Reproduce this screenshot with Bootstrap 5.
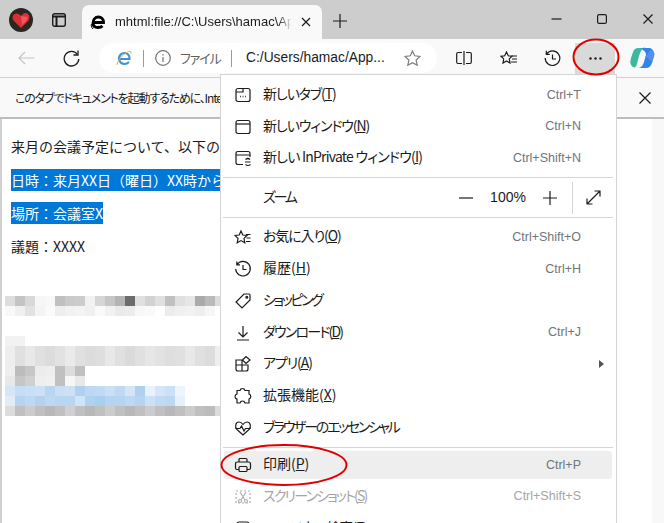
<!DOCTYPE html>
<html lang="ja">
<head>
<meta charset="UTF-8">
<meta name="viewport" content="width=device-width, initial-scale=1.0">
<title>Edge メニュー</title>
<link href="https://cdn.jsdelivr.net/npm/bootstrap@5.3.2/dist/css/bootstrap.min.css" rel="stylesheet">
<style>
  html, body { height: 523px; overflow: hidden; }
  body { font-family: "Liberation Sans", "Noto Sans CJK JP", sans-serif; font-size: 14px; color: #1b1b1b; background: #fff; position: relative; }
  svg { display: block; flex: none; fill: none; stroke: #1c1c1c; stroke-width: 1.2; }
  .tabstrip { height: 39px; background: #cdcdcd; }
  .profile-slot { width: 42px; }
  .tabs-btn { width: 40px; padding-right: 6px; }
  .page-tab { width: 240px; height: 34px; background: #f9f9f9; border-radius: 7px 7px 0 0; padding: 0 11px 0 8px; font-size: 13px; white-space: nowrap; }
  .page-tab-title { width: 182px; overflow: hidden; margin: 0 9px 0 9px; -webkit-mask-image: linear-gradient(90deg, #000 92%, transparent); mask-image: linear-gradient(90deg, #000 92%, transparent); }
  .newtab-btn { width: 36px; }
  .win-btn { width: 46px; padding-left: 14px; }
  .toolbar { height: 39px; background: #f9f9f9; border-bottom: 1px solid #d0d0d0; overflow: hidden; }
  .tool-btn { width: 44px; height: 31px; flex: none; }
  .tool-btn.is-open { width: 40px; background: #d9d9d9; margin: 0 5px 0 1px; }
  .address { width: 338px; height: 30px; background: #fff; border-radius: 15px; margin: 0 5px 0 6px; padding: 0 16px 0 17px; white-space: nowrap; flex: none; }
  .addr-sep { width: 1px; height: 17px; background: #9a9a9a; }
  .addr-scheme { color: #5f5f5f; font-family: "Noto Sans CJK JP", sans-serif; font-feature-settings: "palt"; font-size: 13px; letter-spacing: -1.1px; margin: 0 11px 0 9px; width: 40px; }
  .addr-path { margin-left: 14px; font-size: 13.8px; width: 142px; }
  .infobar { height: 41px; background: #f9f9f9; border-bottom: 2px solid #bdbdbd; padding: 0 11px 0 15px; font-family: "Noto Sans CJK JP", sans-serif; font-feature-settings: "palt"; font-size: 12px; letter-spacing: -1.15px; white-space: nowrap; overflow: hidden; }
  .doc { height: 404px; border-left: 2px solid #d0d0d0; padding-left: 9px; font-family: "Noto Sans CJK JP", sans-serif; font-size: 14px; line-height: 22px; }
  .doc-line { height: 22px; white-space: nowrap; margin-bottom: 11px; overflow: hidden; }
  .doc-line.first { margin-top: 16px; margin-bottom: 12px; }
  .doc-sel { background: #0078d7; color: #fff; display: inline-block; }
  .doc-sel.wide { width: 209px; overflow: hidden; }
  .scroll-rail { width: 12px; background: #f8f8f8; }
  .mosaic { margin: 39px 0 0 -6px; }
  .mosaic-row { height: 10px; }
  .mosaic-cell { width: 10px; height: 10px; flex: none; }
  .mosaic-gap { height: 20px; }
  .app-menu { position: absolute; left: 220px; top: 74px; width: 397px; height: 460px; background: #fff; border: 1px solid #d4d4d4; border-bottom: 0; padding-top: 4px; font-family: "Noto Sans CJK JP", sans-serif; font-feature-settings: "palt"; }
  .menu-row { height: 31.8px; padding: 0 31px 0 10px; margin: 0 4px 0 3px; white-space: nowrap; border-radius: 3px; }
  .menu-row.is-hover { background: #eeeeee; }
  .menu-row.is-off { color: #a5a5a5; }
  .menu-row.is-off svg { stroke: #b0b0b0; }
  .menu-label { margin-left: 11px; font-size: 14px; padding-bottom: 3px; }
  .track-0 { letter-spacing: -.8px; }
  .track-1 { letter-spacing: -1.1px; }
  .track-2 { letter-spacing: -1.8px; }
  .track-3 { letter-spacing: -2.3px; }
  .menu-key { margin-left: auto; font-family: "Liberation Sans", sans-serif; font-size: 12.5px; color: #70757a; }
  .menu-rule { height: 1px; background: #d6d6d6; margin: 3px 3px 0 2px; }
  .zoom-row { height: 39px; padding: 0 15px 0 42px; }
  .zoom-ctl { margin-left: auto; }
  .zoom-val { width: 52px; text-align: center; font-family: "Liberation Sans", sans-serif; font-size: 14px; margin: 0 9px; }
  .zoom-sep { width: 1px; height: 32px; background: #d6d6d6; margin: 0 13px 0 15px; }
  .mark-ring { position: absolute; fill: none; stroke: #e00000; stroke-width: 2; }
</style>
</head>
<body>
  <div class="tabstrip d-flex align-items-end">
    <div class="profile-slot d-flex justify-content-center align-self-center">
      <svg width="24" height="24" viewBox="0 0 24 24" style="stroke:none"><circle cx="12" cy="12" r="12" fill="#2a2622"/><path d="M12 20 4.500 12.500C2.500 9.500 4 5.500 7.500 5.500 9.500 5.500 11 6.500 12 8 13 6.500 14.500 5 16.500 5 20 5 21.500 9 19.500 12.500Z" fill="#dc2f35"/><path d="M12 8 13 17 17 13.500 19 9Z" fill="#f0565c"/></svg>
    </div>
    <div class="tabs-btn d-flex justify-content-center align-self-center">
      <svg width="14" height="14" viewBox="0 0 14 14" style="stroke-width:1.400"><rect x=".7" y=".7" width="12.600" height="12.600" rx="2"/><path d="M.7 3.500H13.300M4.500 3.500V13.300" stroke-width="2"/></svg>
    </div>
    <div class="page-tab d-flex align-items-center">
      <svg width="16" height="16" viewBox="0 0 16 16" style="stroke:#000;stroke-width:2.800"><path d="M3.500 8.500H13.500C13.500 4.500 11 3 8.500 3 5 3 3 6 3 9 3 12 5 13.500 8 13.500 9.500 13.500 11.500 13 12.500 12"/><path d="M3 15C1 13 1 11 1.500 10" stroke-width="1"/></svg>
      <span class="page-tab-title">mhtml:file://C:\Users\hamac\AppData</span>
      <svg width="10" height="10" viewBox="0 0 10 10"><path d="M1 1 9 9M9 1 1 9"/></svg>
    </div>
    <div class="newtab-btn d-flex justify-content-center align-self-center">
      <svg width="14" height="14" viewBox="0 0 14 14" style="margin-top:3px"><path d="M7 0V14M0 7H14"/></svg>
    </div>
    <div class="win-btn d-flex justify-content-center align-self-start ms-auto" style="margin-top:13px">
      <svg width="11" height="11" viewBox="0 0 11 11"><path d="M.5 6H10.500"/></svg>
    </div>
    <div class="win-btn d-flex justify-content-center align-self-start" style="margin-top:14px">
      <svg width="10" height="10" viewBox="0 0 10 10"><rect x=".6" y=".6" width="8.800" height="8.800" rx="1.500"/></svg>
    </div>
    <div class="win-btn d-flex justify-content-center align-self-start" style="margin-top:14px">
      <svg width="10" height="10" viewBox="0 0 10 10"><path d="M.5.500 9.500 9.500M9.500.500.500 9.500"/></svg>
    </div>
  </div>

  <div class="toolbar d-flex align-items-center">
    <div class="tool-btn d-flex align-items-center justify-content-center ms-1" style="width:45px">
      <svg width="17" height="14" viewBox="0 0 17 14" style="stroke:#c4c4c4"><path d="M16.500 7H1M7 1 1 7 7 13"/></svg>
    </div>
    <div class="tool-btn d-flex align-items-center justify-content-center">
      <svg width="17" height="17" viewBox="0 0 17 17" style="stroke-width:1.300"><path d="M14.500 4.500A7.300 7.300 0 1 0 15.800 9"/><path d="M15 .5V5H10.500"/></svg>
    </div>
    <div class="address d-flex align-items-center">
      <svg width="16" height="16" viewBox="0 0 16 16" style="stroke-width:2.200;stroke:#3d93d6"><path d="M3.500 9H13.500C14 5 11 3 8.500 3 5.500 3 3 5.500 3 8.500 3 12 6 14 8.500 14 10.500 14 12 13 13 12"/><path d="M1 15C1 13 3 8 10 3 13 1 15.500 .5 15 3.500" stroke="#e8b13f" stroke-width="1"/></svg>
      <span class="addr-sep" style="margin-left:11px"></span>
      <svg style="margin-left:11px" width="16" height="16" viewBox="0 0 16 16" stroke="#747474"><circle cx="8" cy="8" r="7.300" stroke="#747474"/><path d="M8 7V12M8 4V5.500" stroke="#747474"/></svg>
      <span class="addr-scheme">ファイル</span>
      <span class="addr-sep"></span>
      <span class="addr-path">C:/Users/hamac/App...</span>
      <svg class="ms-auto" width="17" height="16" viewBox="0 0 17 16"><path stroke="#7c7c7c" d="M8.500 1 10.700 5.800 16 6.400 12.100 10 13.200 15.200 8.500 12.600 3.800 15.200 4.900 10 1 6.400 6.300 5.800Z"/></svg>
    </div>
    <div class="tool-btn d-flex align-items-center justify-content-center">
      <svg width="16" height="14" viewBox="0 0 16 14"><path d="M8 0V14M6 1.500H2Q.7 1.500 .7 3V11Q.7 12.500 2 12.500H6M10 1.500H14Q15.300 1.500 15.300 3V11Q15.300 12.500 14 12.500H10"/></svg>
    </div>
    <div class="tool-btn d-flex align-items-center justify-content-center">
      <svg width="17" height="15" viewBox="0 0 17 15"><path d="M6.500 1 8.300 4.800 12 5.300 9.300 7.900 10 12 6.500 10 3 12 3.700 7.900 1 5.300 4.700 4.800Z"/><path d="M11.500 6H17M12 9H17M11 12H17" transform="translate(0 -1)"/></svg>
    </div>
    <div class="tool-btn d-flex align-items-center justify-content-center">
      <svg width="17" height="17" viewBox="0 0 17 17"><path d="M2.500 4A7.300 7.300 0 1 1 1.200 8M2.300 .8V4.300H5.800M8.500 4.500V9H12"/></svg>
    </div>
    <div class="tool-btn is-open d-flex align-items-center justify-content-center">
      <svg width="13" height="3" viewBox="0 0 13 3" style="fill:#1c1c1c;stroke:none"><circle cx="1.500" cy="1.500" r="1.200"/><circle cx="6.500" cy="1.500" r="1.200"/><circle cx="11.500" cy="1.500" r="1.200"/></svg>
    </div>
    <div class="tool-btn d-flex align-items-center justify-content-center">
      <svg width="25" height="24" viewBox="0 0 25 24" style="stroke:none"><path d="M8 2H13C11 4 10 7 9 10L7 18C6 21 5 22 3 21 0 19 0 16 1 12L3 6C4 3 6 2 8 2Z" fill="#3cb8a0"/><path d="M11 3C13 1 16 2 18 2H20C23 3 25 7 24 10L22 17C21 20 19 22 16 22H9C12 21 13 19 14 16L16 9C16 6 14 4 11 3Z" fill="#2f86e8"/><path d="M15 11 21 4C24 5 25 8 24 10L22 16 18 12Z" fill="#5b8df0"/></svg>
    </div>
  </div>

  <div class="infobar d-flex align-items-center">
    <span>このタブでドキュメントを起動するために、Internet Explorer モードを使用しています</span>
    <svg class="position-absolute" style="left:639px;top:92px" width="12" height="12" viewBox="0 0 12 12"><path d="M.5.500 11.500 11.500M11.500.500.500 11.500"/></svg>
  </div>

  <div class="d-flex">
    <div class="doc flex-grow-1 overflow-hidden">
      <div class="doc-line first">来月の会議予定について、以下のとおりご連絡します。</div>
      <div class="doc-line"><span class="doc-sel wide">日時：来月XX日（曜日）XX時から</span></div>
      <div class="doc-line"><span class="doc-sel">場所：会議室X</span></div>
      <div class="doc-line">議題：XXXX</div>
      <div id="mosaic" class="mosaic"></div>
    </div>
    <div class="scroll-rail"></div>
  </div>

  <div class="app-menu">
    <div class="menu-row d-flex align-items-center"><svg width="18" height="18" viewBox="0 0 18 18"><rect x="2" y="2.500" width="14" height="13" rx="2"/><path d="M2 6H9V2.500"/><path d="M6 10.500H6.800M8.600 10.500H9.400M11.200 10.500H12" stroke-width="1.500"/></svg><span class="menu-label track-1">新しいタブ(<u>T</u>)</span><span class="menu-key">Ctrl+T</span></div>
    <div class="menu-row d-flex align-items-center"><svg width="18" height="18" viewBox="0 0 18 18"><rect x="2" y="2.500" width="14" height="13" rx="2"/><path d="M2 6H16"/></svg><span class="menu-label track-1">新しいウィンドウ(<u>N</u>)</span><span class="menu-key">Ctrl+N</span></div>
    <div class="menu-row d-flex align-items-center"><svg width="18" height="18" viewBox="0 0 18 18"><path d="M9 15.500H4Q2 15.500 2 13.500V4.500Q2 2.500 4 2.500H14Q16 2.500 16 4.500V8M2 6H16"/><path d="M11.500 10.500Q14 8.500 16 10.500M11 13H16.500M11.500 15.500Q14 17.500 16.500 15.500"/></svg><span class="menu-label track-0">新しい InPrivate ウィンドウ(<u>I</u>)</span><span class="menu-key">Ctrl+Shift+N</span></div>
    <div class="menu-rule"></div>
    <div class="zoom-row d-flex align-items-center">
      <span class="menu-label track-3" style="margin-left:0">ズーム</span>
      <div class="zoom-ctl d-flex align-items-center">
        <svg width="14" height="14" viewBox="0 0 14 14"><path d="M0 7H14"/></svg>
        <span class="zoom-val">100%</span>
        <svg width="14" height="14" viewBox="0 0 14 14"><path d="M7 0V14M0 7H14"/></svg>
        <span class="zoom-sep"></span>
        <svg width="15" height="15" viewBox="0 0 15 15"><path d="M1 14 14 1M8.500 1H14V6.500M1 8.500V14H6.500"/></svg>
      </div>
    </div>
    <div class="menu-rule" style="margin-top:0;margin-bottom:3px"></div>
    <div class="menu-row d-flex align-items-center"><svg width="18" height="18" viewBox="0 0 18 18"><path d="M7 2 8.800 6 13 6.500 10 9.400 10.800 13.800 7 11.600 3.200 13.800 4 9.400 1 6.500 5.200 6Z" transform="translate(0 1)"/><path d="M12 6.500H16.500M12.500 10H16.500M12 13.500H16.500"/></svg><span class="menu-label track-1">お気に入り(<u>O</u>)</span><span class="menu-key">Ctrl+Shift+O</span></div>
    <div class="menu-row d-flex align-items-center"><svg width="18" height="18" viewBox="0 0 18 18"><path d="M3 4.500A7.300 7.300 0 1 1 1.700 9M2.800 1.500V4.800H6M9 5V9.500H12.500"/></svg><span class="menu-label">履歴(<u>H</u>)</span><span class="menu-key">Ctrl+H</span></div>
    <div class="menu-row d-flex align-items-center"><svg width="18" height="18" viewBox="0 0 18 18"><path d="M10 2H15Q16 2 16 3V8L8 16 2 10Z"/><circle cx="12.800" cy="5.200" r=".9"/></svg><span class="menu-label track-3">ショッピング</span></div>
    <div class="menu-row d-flex align-items-center"><svg width="18" height="18" viewBox="0 0 18 18"><path d="M9 2V13M4.500 8.500 9 13 13.500 8.500M3 16H15"/></svg><span class="menu-label track-2">ダウンロード(<u>D</u>)</span><span class="menu-key">Ctrl+J</span></div>
    <div class="menu-row d-flex align-items-center"><svg width="18" height="18" viewBox="0 0 18 18"><path d="M2 5H8V16H4Q2 16 2 14ZM8 10H14V14Q14 16 12 16H8M2 10H8M8.500 5 12 1.500 16 5 12 8.500Z"/></svg><span class="menu-label track-1">アプリ(<u>A</u>)</span><svg class="ms-auto" style="margin-right:-23px;fill:#555;stroke:none" width="5" height="8" viewBox="0 0 5 8"><path d="M0 0 5 4 0 8Z"/></svg></div>
    <div class="menu-row d-flex align-items-center"><svg width="18" height="18" viewBox="0 0 18 18"><path d="M6 3.500Q6.500 1.500 8.500 1.500 10.500 1.500 11 3.500H15V7Q16.800 7.500 16.800 9.500T15 12V16H11Q10.500 14 8.500 14T6 16H3V12Q1 11.500 1 9.500T3 7V3.500Z"/></svg><span class="menu-label">拡張機能(<u>X</u>)</span></div>
    <div class="menu-row d-flex align-items-center"><svg width="18" height="18" viewBox="0 0 18 18"><path d="M9 16 3 10.500C.5 8 1.500 3 5 3 7 3 8 4 9 5.500 10 4 11 3 13 3 16.500 3 17.500 8 15 10.500Z"/><path d="M1.500 9.500H6L7.500 7 10 12 11.500 9.500H16.500"/></svg><span class="menu-label track-3">ブラウザーのエッセンシャル</span></div>
    <div class="menu-rule" style="margin:3px 3px 3px 2px"></div>
    <div class="menu-row is-hover d-flex align-items-center" style="height:28px"><svg width="18" height="18" viewBox="0 0 18 18"><path d="M5 6V3.500Q5 2.500 6 2.500H12Q13 2.500 13 3.500V6M5 13.500H3Q1.500 13.500 1.500 12V8Q1.500 6 3.500 6H14.500Q16.500 6 16.500 8V12Q16.500 13.500 15 13.500H13"/><rect x="5" y="10.500" width="8" height="5" rx="1"/></svg><span class="menu-label">印刷(<u>P</u>)</span><span class="menu-key">Ctrl+P</span></div>
    <div class="menu-row is-off d-flex align-items-center" style="margin-top:2px"><svg width="18" height="18" viewBox="0 0 18 18"><path stroke-dasharray="2 2" d="M2 3H16V15H2Z"/><path d="M6 4 11 12M12 4 7 12"/><circle cx="6" cy="13" r="1.500"/><circle cx="12" cy="13" r="1.500"/></svg><span class="menu-label track-2">スクリーンショット(<u>S</u>)</span><span class="menu-key" style="color:#a5a5a5">Ctrl+Shift+S</span></div>
    <div class="menu-row d-flex align-items-center"><svg width="18" height="18" viewBox="0 0 18 18"><rect x="3" y="2" width="12" height="14" rx="2"/></svg><span class="menu-label track-1">ページ内の検索(<u>F</u>)</span></div>
  </div>

  <svg class="mark-ring" style="left:220px;top:443px" width="130" height="46" viewBox="0 0 130 46"><ellipse cx="64" cy="22" rx="62.500" ry="20"/></svg>
  <svg class="mark-ring" style="left:572px;top:38px" width="48" height="38" viewBox="0 0 48 38"><ellipse cx="24" cy="19" rx="22.500" ry="17.500"/></svg>

  <script>
    // モザイク部分は 10px 四方のセルで並べる
    const mosaicRows = [
      ["dd","c4","d8","f6","f8","c0","ca","cc","f2","d6","c6","b4","6c","e0","d2","e0","c0","e0","e6","aa","ba","dc"],
      ["f8","f0","e2","f4","fa","ee","f2","f4","f0","fa","f2","ea","ec","f8","fa","ff","ec","f0","f2","ee","f6","ff"],
      null,
      ["f2","f2"],
      ["ee","e0","e8","e0","dc","e2","ea","e0","dc","de","e8","e0","da","e0","e6","e2","de","e0","e8","e0","dc","ee"],
      ["ee","e0","e8","e0","dc","e2","ea","e0","dc","de","e8","e0","da","e0","e6","e2","de","e0","e8","e0","dc","ee"],
      ["ee","bc","c6","ec","ee","c0","dc","c0"],
      ["e8","c6","d0","ee","f0","c0","f6","e8"],
      ["d4e6f8","c4def6","c8e0f6","cce0f6","b8d6f2","c8dff6","cce0f6","b0d0f0","bcd8f4","c0daf4","c8dff6","c0d8f4","d4e6f6","b0d0f0","e8f2fb","d4e6f8","cce0f6","ecf4fd"],
      ["e0edf9","b4d4f2","bcd8f2","b4d2f0","bcd8f2","b8d6f2","b8d6f2","d0e4f8","b0d2f2","a8cef0","b4d4f2","b4d4f2","bcd8f2","b4d4f2","cce0f6","c0daf4","bcd8f2","e6f0fb"],
      ["dc","c0","cc","c0","b8","c0","d0","c0","b8","c0","cc","c0","b8","c0","cc","c0","b8","c0","cc","c0","bc","dc"]
    ];
    document.getElementById("mosaic").innerHTML = mosaicRows.map((row) => {
      if (!row) return '<div class="mosaic-gap"></div>';
      const cells = row.map((c) => {
        const color = c.length === 2 ? c + c + c : c;
        return `<div class="mosaic-cell" style="background:#${color}"></div>`;
      }).join("");
      return `<div class="mosaic-row d-flex">${cells}</div>`;
    }).join("");
  </script>
  <script src="https://cdn.jsdelivr.net/npm/bootstrap@5.3.2/dist/js/bootstrap.bundle.min.js"></script>
</body>
</html>
